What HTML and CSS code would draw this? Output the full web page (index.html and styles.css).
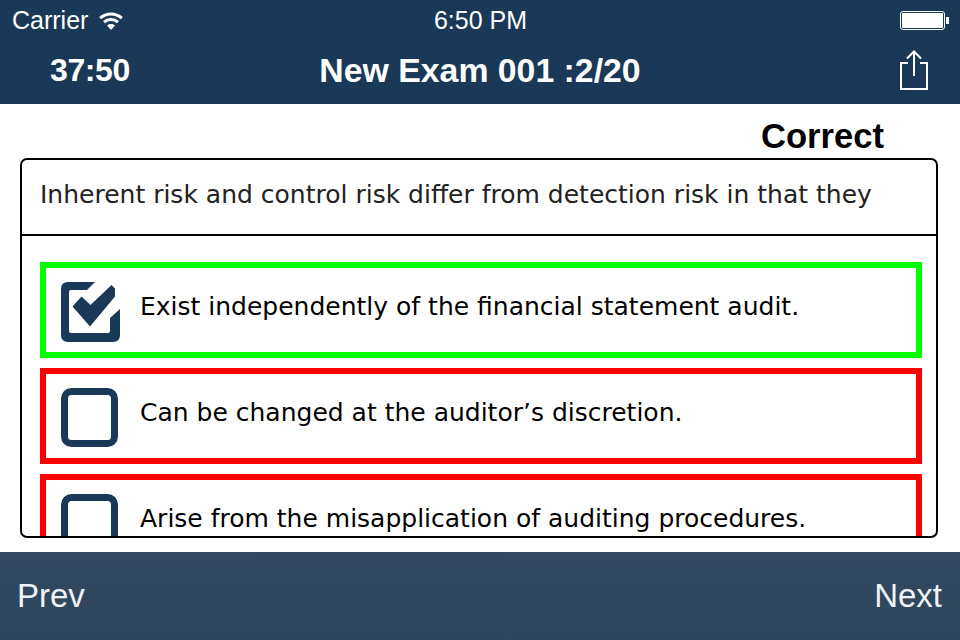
FILE: index.html
```html
<!DOCTYPE html>
<html lang="en">
<head>
<meta charset="UTF-8" />
<meta name="viewport" content="width=device-width, initial-scale=1" />
<title>New Exam 001</title>
<link rel="stylesheet" href="styles.css">
</head>
<body>

<header class="top">
  <div class="status-bar">
    <div class="carrier">
      Carrier
      <svg class="wifi" width="24" height="19" viewBox="0 0 24 19">
        <path d="M1.2 7.2C7.2 1.6 16.8 1.6 22.8 7.2" fill="none" stroke="#fff" stroke-width="3"/>
        <path d="M5 11.2C9 7.6 15 7.6 19 11.2" fill="none" stroke="#fff" stroke-width="3"/>
        <path d="M8 14.4C10.4 12.6 13.6 12.6 16 14.4L12 19Z" fill="#fff"/>
      </svg>
    </div>
    <div class="time">6:50 PM</div>
    <div class="battery"><span class="battery-body"></span><span class="battery-tip"></span></div>
  </div>
  <div class="title-bar">
    <div class="timer">37:50</div>
    <div class="title">New Exam 001 :2/20</div>
    <svg class="share" width="28" height="40" viewBox="0 0 28 40">
      <path d="M8 13H1V39H27V13H20" fill="none" stroke="#fff" stroke-width="2"/>
      <path d="M14 2V26" fill="none" stroke="#fff" stroke-width="2"/>
      <path d="M7 8.5L14 1.5L21 8.5" fill="none" stroke="#fff" stroke-width="2"/>
    </svg>
  </div>
</header>

<main class="content">
  <div class="result">Correct</div>
  <div class="card">
    <div class="question">Inherent risk and control risk differ from detection risk in that they</div>
    <div class="options">
      <div class="option right">
        <svg class="box" width="60" height="60" viewBox="0 0 60 60">
          <path d="M34 0H7Q0 0 0 7V53Q0 60 7 60H52Q59 60 59 53V27L49 36V49Q49 51 47 51H10Q8 51 8 49V10Q8 8 10 8H26Z" fill="#1a3857"/>
          <path d="M11.5 24.5L20.5 14.5L29.5 23L50.5 3L54 6.5V14.5L29 44.5Z" fill="#1a3857"/>
        </svg>
        <span>Exist independently of the financial statement audit.</span>
      </div>
      <div class="option wrong">
        <svg class="box" width="60" height="60" viewBox="0 0 60 60">
          <rect x="3.5" y="3.5" width="50" height="52" rx="7" fill="none" stroke="#1a3857" stroke-width="7"/>
        </svg>
        <span>Can be changed at the auditor’s discretion.</span>
      </div>
      <div class="option wrong">
        <svg class="box" width="60" height="60" viewBox="0 0 60 60">
          <rect x="3.5" y="3.5" width="50" height="52" rx="7" fill="none" stroke="#1a3857" stroke-width="7"/>
        </svg>
        <span>Arise from the misapplication of auditing procedures.</span>
      </div>
    </div>
  </div>
</main>

<footer class="bottom">
  <div>Prev</div>
  <div>Next</div>
</footer>

</body>
</html>
```

FILE: styles.css
```css
* {
  box-sizing: border-box;
}
body {
  margin: 0;
  width: 960px;
  height: 640px;
  overflow: hidden;
  display: flex;
  flex-direction: column;
  background-color: #fff;
  font-family: "Liberation Sans", Arial, sans-serif;
}
.top {
  height: 104px;
  background-color: #1a3857;
  color: #fff;
}
.status-bar {
  height: 40px;
  padding: 0 11px 0 12px;
  display: grid;
  grid-template-columns: 1fr auto 1fr;
  align-items: center;
  font-size: 25px;
}
.carrier {
  display: flex;
  align-items: center;
  gap: 11px;
}
.battery {
  justify-self: end;
  display: flex;
  align-items: center;
}
.battery-body {
  width: 45px;
  height: 19px;
  padding: 1px;
  border: 1px solid #fff;
  border-radius: 3px;
  background-color: #fff;
  background-clip: content-box;
}
.battery-tip {
  width: 3px;
  height: 7px;
  margin-left: 1px;
  background-color: #fff;
}
.title-bar {
  height: 64px;
  padding: 0 32px 4px;
  display: grid;
  grid-template-columns: 1fr auto 1fr;
  align-items: center;
  font-size: 33.8px;
  font-weight: bold;
}
.timer {
  padding-left: 18px;
  font-size: 32px;
  letter-spacing: -0.4px;
}
.share {
  justify-self: end;
}
.content {
  flex: 1;
  padding: 12px 22px 14px 20px;
  display: flex;
  flex-direction: column;
}
.result {
  height: 42px;
  padding-right: 54px;
  text-align: right;
  color: #000;
  font-size: 34.6px;
  font-weight: bold;
  line-height: 40px;
}
.card {
  height: 380px;
  border: 2px solid #000;
  border-radius: 7px;
  overflow: hidden;
}
.question {
  height: 76px;
  padding: 20px 0 0 18px;
  border-bottom: 2px solid #000;
  font-family: "DejaVu Sans", Verdana, sans-serif;
  font-size: 25px;
  color: #222;
  white-space: nowrap;
}
.options {
  padding: 26px 14px 0 18px;
  display: flex;
  flex-direction: column;
  gap: 10px;
}
.option {
  flex: none;
  height: 96px;
  padding: 14px 0 0 15px;
  border: 6px solid;
  display: flex;
  align-items: flex-start;
  gap: 19px;
  font-family: "DejaVu Sans", Verdana, sans-serif;
  font-size: 25px;
  color: #000;
  white-space: nowrap;
}
.option.right {
  border-color: #00ff00;
}
.option.wrong {
  border-color: #ff0000;
}
.option span {
  padding-top: 10px;
}
.box {
  flex: none;
}
.bottom {
  height: 88px;
  padding: 0 18px 0 17px;
  display: flex;
  align-items: center;
  justify-content: space-between;
  background: linear-gradient(#34495f, #2d4560);
  color: #f0f3f6;
  font-size: 33px;
}
```
